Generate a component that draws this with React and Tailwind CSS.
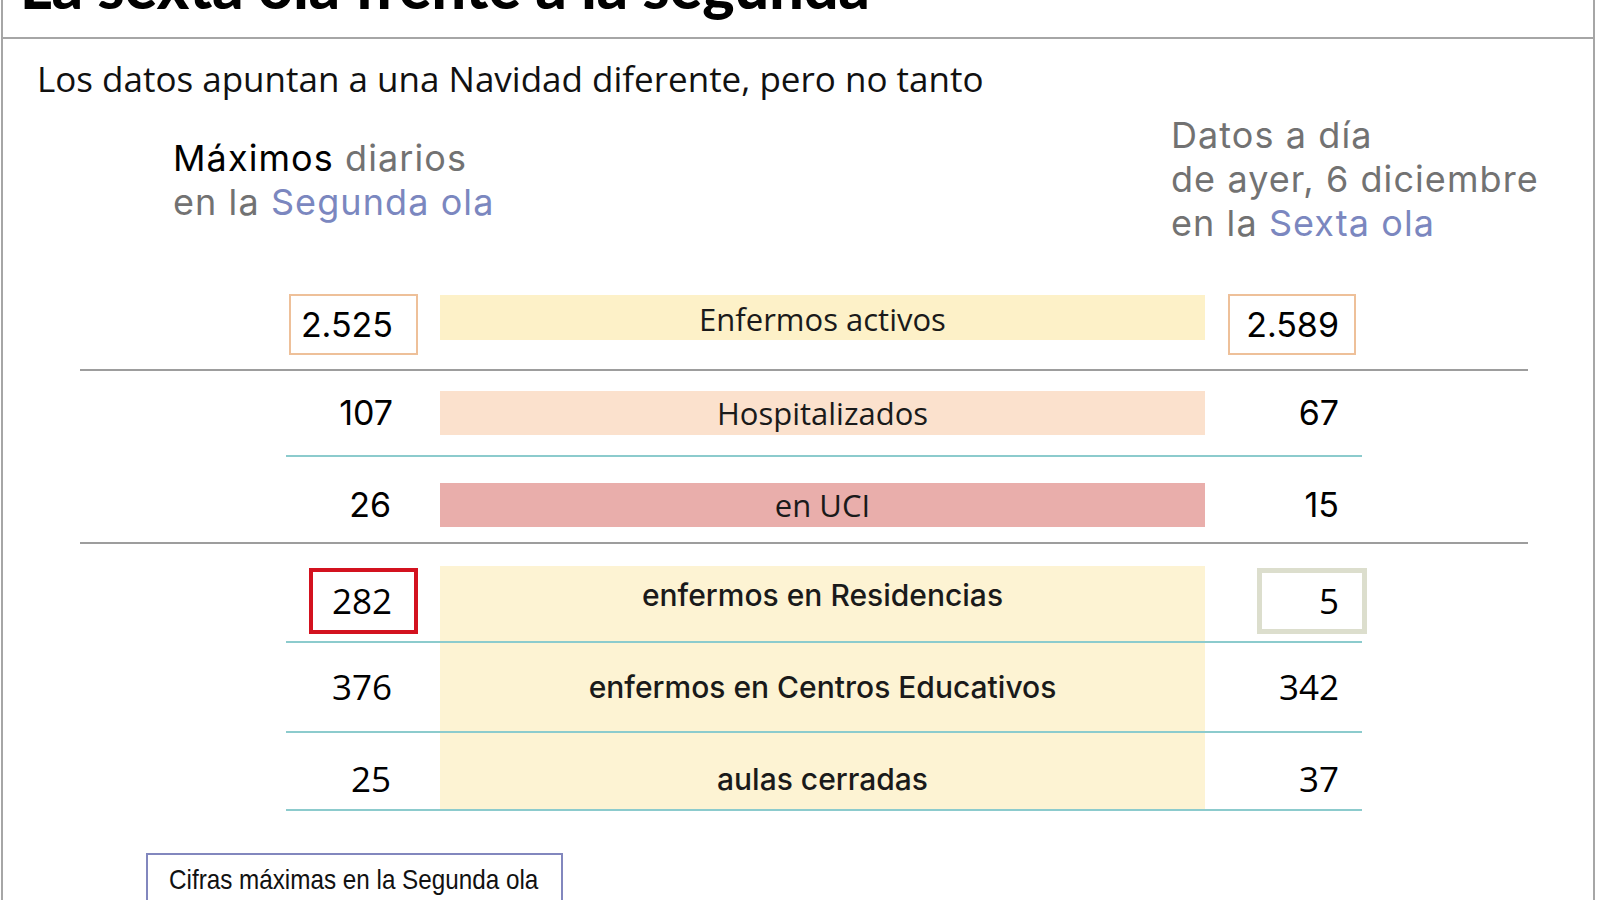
import React from 'react'

const rowNum = "text-[34px] leading-[40px] text-black font-['Inter',sans-serif]"
const rowNumB = "text-[35px] leading-[40px] text-black font-['Open_Sans',sans-serif]"
const label = "text-[31px] leading-[40px] font-medium text-[#1a1a1a] font-['Open_Sans',sans-serif]"
const labelB = "text-[30px] leading-[40px] font-medium text-[#1a1a1a] font-['Inter',sans-serif]"

const GrayLine = () => <div className="h-[2px] w-full bg-[#9d9d9d]" />
const TealLine = () => <div className="ml-[206px] h-[2px] w-[1076px] bg-[#8ccbcd]" />

const App = () => {
    return (
        <div className="w-[1600px] h-[900px] overflow-hidden bg-white">
            <div className="ml-[1px] w-[1594px] h-full border-l-2 border-r-2 border-[#a6a6a6]">
                {/* title, cut off at the top */}
                <div className="h-[39px] overflow-hidden border-b-2 border-[#a6a6a6]">
                    <div className="pl-[17px] -mt-[49px] text-[61px] leading-[70px] font-black text-black font-['Lato',sans-serif] whitespace-nowrap">
                        La sexta ola frente a la segunda
                    </div>
                </div>

                <div className="mt-[20px] pl-[34px] text-[35px] leading-[40px] text-[#111] font-['Open_Sans',sans-serif]">
                    Los datos apuntan a una Navidad diferente, pero no tanto
                </div>

                {/* column headers */}
                <div className="mt-[14px] flex items-start font-['Inter',sans-serif] text-[36px] leading-[44px] tracking-[0.03em]">
                    <div className="w-[1168px] pl-[170px] mt-[23px]">
                        <div>
                            <span className="text-black">Máximos</span> <span className="text-[#727272]">diarios</span>
                        </div>
                        <div className="text-[#727272]">
                            en la <span className="text-[#7b87bf]">Segunda ola</span>
                        </div>
                    </div>
                    <div className="text-[#727272]">
                        <div>Datos a día</div>
                        <div>de ayer, 6 diciembre</div>
                        <div>en la <span className="text-[#7b87bf]">Sexta ola</span></div>
                    </div>
                </div>

                {/* table */}
                <div className="mt-[49px] ml-[77px] w-[1448px]">
                    {/* Enfermos activos */}
                    <div className="flex h-[61px]">
                        <div className="w-[360px] flex justify-end pr-[22px]">
                            <div className={`w-[129px] h-[61px] border-2 border-[#eec099] flex items-center justify-end pr-[23px] ${rowNum}`}>2.525</div>
                        </div>
                        <div className={`w-[765px] h-[45px] mt-[1px] pt-[3px] bg-[#fdf1c8] flex items-center justify-center ${label}`}>Enfermos activos</div>
                        <div className="pl-[23px]">
                            <div className={`w-[128px] h-[61px] border-2 border-[#eec099] flex items-center justify-end pr-[15px] ${rowNum}`}>2.589</div>
                        </div>
                    </div>
                    <div className="h-[14px]" />
                    <GrayLine />

                    {/* Hospitalizados */}
                    <div className="flex items-center pt-[20px] pb-[20px]">
                        <div className={`w-[360px] text-right pr-[47px] ${rowNum}`}>107</div>
                        <div className={`w-[765px] h-[44px] bg-[#fbe1cd] flex items-center justify-center ${label}`}>Hospitalizados</div>
                        <div className={`w-[134px] text-right ${rowNum}`}>67</div>
                    </div>
                    <TealLine />

                    {/* en UCI */}
                    <div className="flex items-center pt-[26px] pb-[15px]">
                        <div className={`w-[360px] text-right pr-[49px] ${rowNum}`}>26</div>
                        <div className={`w-[765px] h-[44px] bg-[#e9aeab] flex items-center justify-center ${label}`}>en UCI</div>
                        <div className={`w-[134px] text-right ${rowNum}`}>15</div>
                    </div>
                    <GrayLine />

                    {/* enfermos en Residencias */}
                    <div className="mt-[22px] flex h-[75px]">
                        <div className="w-[360px] flex justify-end pr-[22px] pt-[2px]">
                            <div className={`w-[109px] h-[66px] border-4 border-[#d3121f] flex items-center justify-end pr-[22px] ${rowNumB}`}>282</div>
                        </div>
                        <div className={`w-[765px] h-full bg-[#fdf3d3] text-center pt-[9px] ${labelB}`}>enfermos en Residencias</div>
                        <div className="pl-[52px] pt-[2px]">
                            <div className={`w-[110px] h-[66px] border-[5px] border-[#dcdecd] flex items-center justify-end pr-[23px] ${rowNumB}`}>5</div>
                        </div>
                    </div>
                    <TealLine />

                    {/* enfermos en Centros Educativos */}
                    <div className="flex h-[88px]">
                        <div className={`w-[360px] flex items-center justify-end pr-[48px] ${rowNumB}`}>376</div>
                        <div className={`w-[765px] h-full bg-[#fdf3d3] flex items-center justify-center ${labelB}`}>enfermos en Centros Educativos</div>
                        <div className={`w-[134px] flex items-center justify-end ${rowNumB}`}>342</div>
                    </div>
                    <TealLine />

                    {/* aulas cerradas */}
                    <div className="flex h-[76px]">
                        <div className={`w-[360px] text-right pr-[49px] pt-[26px] ${rowNumB}`}>25</div>
                        <div className={`w-[765px] h-full bg-[#fdf3d3] text-center pt-[26px] ${labelB}`}>aulas cerradas</div>
                        <div className={`w-[134px] text-right pt-[26px] ${rowNumB}`}>37</div>
                    </div>
                    <TealLine />
                </div>

                {/* legend */}
                <div className="mt-[42px] ml-[143px] w-[417px] h-[60px] border-2 border-[#8287be] pl-[21px] pt-[7px] whitespace-nowrap">
                    <div className="inline-block origin-left scale-x-[0.866] text-[28px] leading-[36px] text-[#111] font-['Liberation_Sans',sans-serif]">
                        Cifras máximas en la Segunda ola
                    </div>
                </div>
            </div>
        </div>
    )
}

export default App
